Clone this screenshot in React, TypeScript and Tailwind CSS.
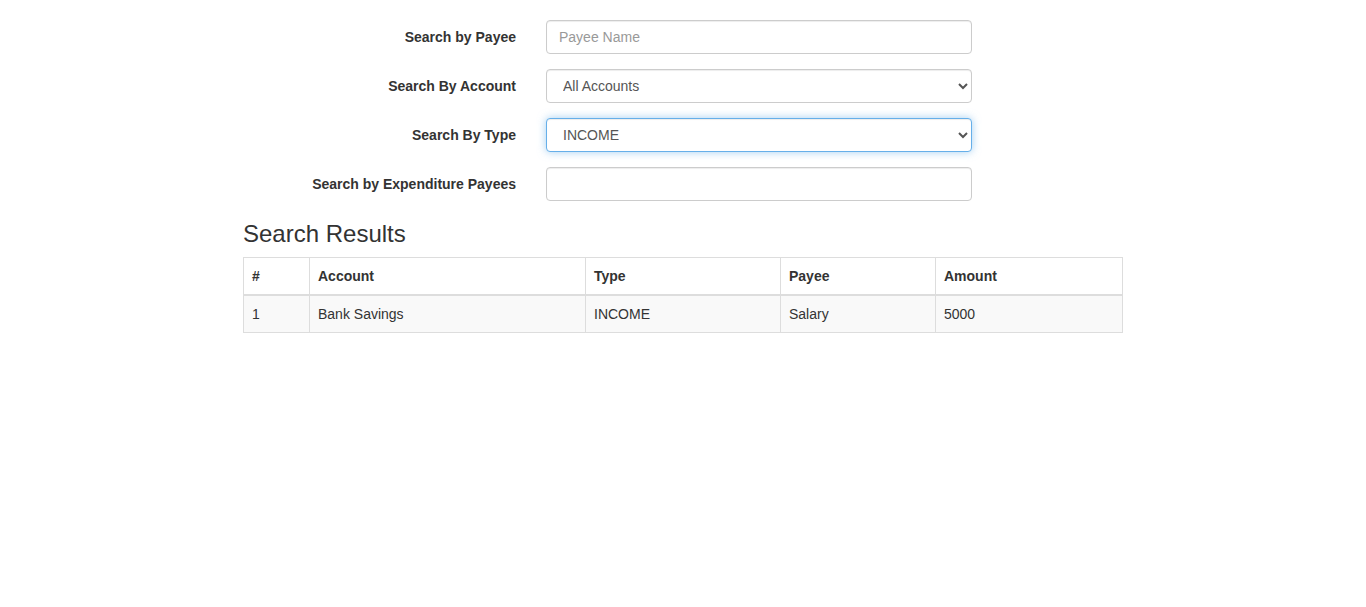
import { useState } from 'react';

const rows = [
  { id: 1, account: 'Bank Savings', type: 'INCOME', payee: 'Salary', amount: 5000 },
];

export default function App() {
  const [payee, setPayee] = useState('');
  const [account, setAccount] = useState('all');
  const [type, setType] = useState('INCOME');

  const labelCls = 'w-[273px] shrink-0 text-right font-bold text-[14px] text-[#333]';
  const baseField = 'ml-[30px] w-[426px] h-[34px] rounded-[4px] border bg-white text-[14px] text-[#555] outline-none';
  const fieldCls = baseField + ' border-[#ccc] shadow-[inset_0_1px_1px_rgba(0,0,0,0.075)]';
  const focusCls = baseField + ' border-[#66afe9] shadow-[inset_0_1px_1px_rgba(0,0,0,0.075),0_0_8px_rgba(102,175,233,0.6)]';

  return (
    <div className="min-h-screen bg-white font-['Liberation_Sans',Arial,sans-serif] text-[14px] leading-[20px] text-[#333]">
      <div className="mx-auto w-[880px] pt-[20px]">
        {/* search form */}
        <div className="flex flex-col gap-[15px]">
          <div className="flex items-center">
            <label className={labelCls}>Search by Payee</label>
            <input
              className={fieldCls + ' px-[12px] placeholder:text-[#999]'}
              placeholder="Payee Name"
              value={payee}
              onChange={e => setPayee(e.target.value)}
            />
          </div>
          <div className="flex items-center">
            <label className={labelCls}>Search By Account</label>
            <select className={fieldCls + ' pl-[12px] pr-[4px]'} value={account} onChange={e => setAccount(e.target.value)}>
              <option value="all">All Accounts</option>
              <option value="savings">Bank Savings</option>
            </select>
          </div>
          <div className="flex items-center">
            <label className={labelCls}>Search By Type</label>
            <select className={focusCls + ' pl-[12px] pr-[4px]'} value={type} onChange={e => setType(e.target.value)}>
              <option value="INCOME">INCOME</option>
              <option value="EXPENDITURE">EXPENDITURE</option>
            </select>
          </div>
          <div className="flex items-center">
            <label className={labelCls}>Search by Expenditure Payees</label>
            <input className={fieldCls + ' px-[12px]'} />
          </div>
        </div>

        {/* results */}
        <h3 className="mt-[20px] mb-[10px] text-[24px] leading-[26px] font-normal text-[#333]">Search Results</h3>
        <table className="w-[880px] border-collapse border border-[#ddd] text-left">
          <thead>
            <tr>
              <th className="w-[66px] border border-b-2 border-[#ddd] p-[8px] font-bold">#</th>
              <th className="w-[276px] border border-b-2 border-[#ddd] p-[8px] font-bold">Account</th>
              <th className="w-[195px] border border-b-2 border-[#ddd] p-[8px] font-bold">Type</th>
              <th className="w-[155px] border border-b-2 border-[#ddd] p-[8px] font-bold">Payee</th>
              <th className="border border-b-2 border-[#ddd] p-[8px] font-bold">Amount</th>
            </tr>
          </thead>
          <tbody>
            {rows.map(r => (
              <tr key={r.id} className="bg-[#f9f9f9]">
                <td className="border border-[#ddd] p-[8px]">{r.id}</td>
                <td className="border border-[#ddd] p-[8px]">{r.account}</td>
                <td className="border border-[#ddd] p-[8px]">{r.type}</td>
                <td className="border border-[#ddd] p-[8px]">{r.payee}</td>
                <td className="border border-[#ddd] p-[8px]">{r.amount}</td>
              </tr>
            ))}
          </tbody>
        </table>
      </div>
    </div>
  );
}
